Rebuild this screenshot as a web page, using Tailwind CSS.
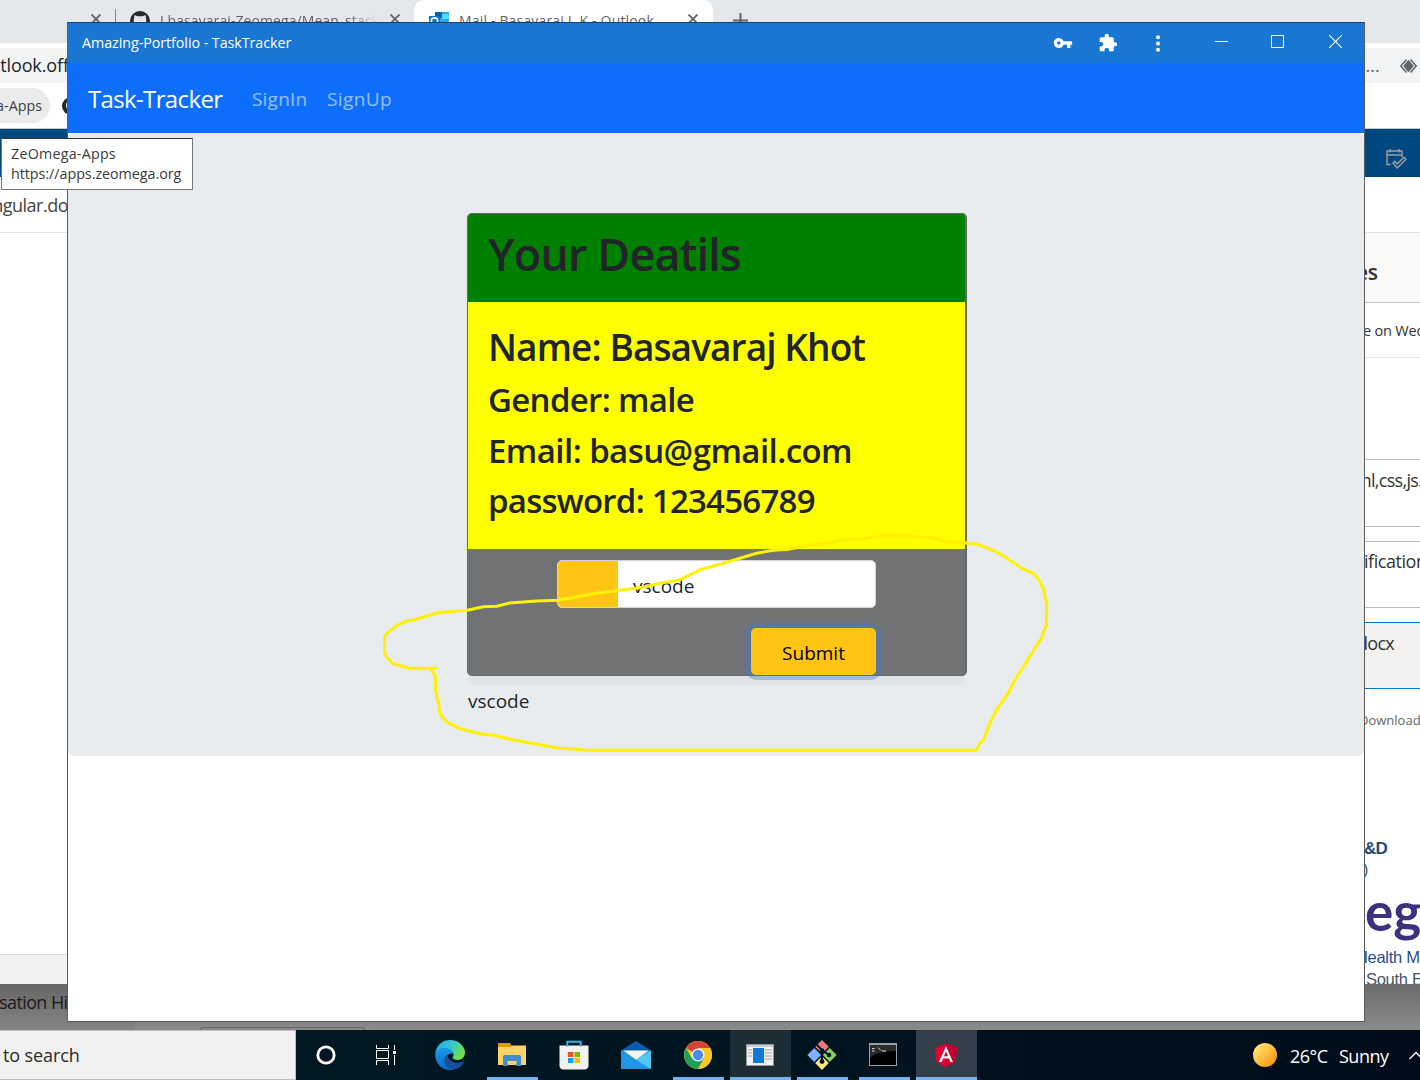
<!DOCTYPE html>
<html lang="en">
<head>
<meta charset="utf-8">
<title>Amazing-Portfolio - TaskTracker</title>
<script src="https://cdn.jsdelivr.net/npm/@tailwindcss/browser@4"></script>
</head>
<body class="overflow-hidden">
<div class="relative w-[1420px] h-[1080px] overflow-hidden bg-[#858585] flex flex-col whitespace-nowrap font-['Open_Sans','Noto_Sans',sans-serif] text-[#212529]">

  <!-- Browser window behind -->
  <div class="h-[984px] shrink-0 bg-white flex flex-col">
    <!-- tab strip -->
    <div class="h-[43px] shrink-0 bg-[#e4e8eb] flex text-[14px] text-[#5f6368]">
      <div class="w-[115px] flex justify-end pt-[14px] pr-[14px]">
        <svg class="w-[10px] h-[10px]" viewBox="0 0 10 10" stroke="#5f6368" stroke-width="1.8"><path d="M0.5.5l9 9M9.5.5l-9 9"/></svg>
      </div>
      <div class="w-px h-[20px] mt-[9px] bg-[#85898c]"></div>
      <div class="w-[298px] flex pl-[14px]">
        <svg class="w-[20px] h-[20px] mt-[11px]" viewBox="0 0 20 20"><circle cx="10" cy="10" r="10" fill="#24292e"/><path d="M4.5 4l3 1.2h5l3-1.2.5 3.500c1 3-.5 6.500-4 7v5.500h-4v-5.500c-3.500-.5-5-4-4-7z" fill="#e4e8eb"/></svg>
        <div class="w-[218px] ml-[10px] overflow-hidden leading-[41px] [mask-image:linear-gradient(to_right,black_86%,transparent)]"><span class="tracking-[0.08px]">J basavaraj-Zeomega/Mean_stack</span></div>
        <svg class="w-[10px] h-[10px] mt-[14px] ml-[12px]" viewBox="0 0 10 10" stroke="#5f6368" stroke-width="1.8"><path d="M0.5.5l9 9M9.5.5l-9 9"/></svg>
      </div>
      <div class="w-[299px] bg-white rounded-t-[10px] flex pl-[15px]">
        <svg class="w-[20px] h-[20px] mt-[12px]" viewBox="0 0 20 20"><path d="M6 0h14v12H6z" fill="#28a8ea"/><path d="M6 0h7v6H6z" fill="#0a62b8"/><path d="M13 2h7v5h-7z" fill="#50d9ff"/><path d="M0 4h11v12H0z" fill="#0078d4"/><circle cx="5.500" cy="9" r="3.200" fill="none" stroke="#fff" stroke-width="1.700"/></svg>
        <div class="w-[219px] ml-[10px] leading-[41px]"><span class="tracking-[0.17px]">Mail - Basavaraj I. K - Outlook</span></div>
        <svg class="w-[10px] h-[10px] mt-[14px] ml-[10px]" viewBox="0 0 10 10" stroke="#5f6368" stroke-width="1.8"><path d="M0.5.5l9 9M9.5.5l-9 9"/></svg>
      </div>
      <svg class="w-[15px] h-[15px] mt-[13px] ml-[20px]" viewBox="0 0 15 15" stroke="#5f6368" stroke-width="2"><path d="M7.500 0v15M0 7.500h15"/></svg>
    </div>
    <!-- address row -->
    <div class="h-[35px] mt-[5px] shrink-0 bg-[#f1f3f4] flex justify-between items-center">
      <div class="w-[67px] flex justify-end overflow-hidden text-[18px]"><span class="-mr-[2px] tracking-[-0.1px]">utlook.off</span></div>
      <div class="w-[55px] flex items-center text-[18px] text-[#5f6368] overflow-hidden">
        <span class="-ml-[8px] w-[43px] shrink-0">s...</span>
        <svg class="w-[17px] h-[14px] shrink-0" viewBox="0 0 17 14"><path d="M6.500.5.8 7l5.700 6.500M10.500.5 16.200 7l-5.700 6.500" fill="none" stroke="#5f6368" stroke-width="1.500"/><path d="M8.500.8 13.800 7l-5.300 6.200L3.200 7z" fill="#5f6368"/></svg>
      </div>
    </div>
    <!-- bookmarks -->
    <div class="h-[45px] shrink-0 flex items-center">
      <div class="w-[50px] h-[35px] rounded-r-full bg-[#ebebeb] flex items-center justify-end pr-[8px] overflow-hidden text-[14.300px]"><span class="text-[#3c4043]">a-Apps</span></div>
      <svg class="w-[18px] h-[18px] ml-[12px]" viewBox="0 0 18 18"><circle cx="9" cy="9" r="9" fill="#24292e"/><circle cx="10" cy="8.500" r="6" fill="#fff"/></svg>
    </div>
    <div class="h-[49px] shrink-0 border-t border-[#c8c8c8] bg-[#004880] flex justify-end items-center pr-[13px]">
      <svg class="w-[21px] h-[20px] mt-[12px]" viewBox="0 0 21 20" fill="none" stroke="#a19f9d" stroke-width="1.400"><path d="M4.500 15.500H1V2h15v6M1 6h15M4 0v3.500M13 0v3.500"/><path d="M7 14l1.700-1.700 2.500 2.400 6.800-6.400 2 2L11.200 19z"/></svg>
    </div>
    <div class="h-[55px] shrink-0 flex items-center overflow-hidden text-[18px] text-[#444] pt-[2px]"><div class="w-[68px] flex justify-end overflow-hidden"><span class="tracking-[-0.5px]">ngular.do</span></div></div>
    <div class="h-[752px] shrink-0 border-t border-[#e3e3e3] flex justify-between">
      <div class="w-[67px] flex flex-col justify-end"><div class="h-[30px] bg-[#f3f2f1] border-t border-[#d8d8d8]"></div></div>
      <div class="w-[55px] overflow-hidden flex flex-col text-[#333] text-[18px]">
        <div class="h-[70px] shrink-0 bg-[#faf9f8] border-b border-[#c8c6c4] text-[21px] font-semibold leading-[78px]"><span class="-ml-[9px] tracking-[-0.3px]">es</span></div>
        <div class="h-[55px] shrink-0 border-b border-[#e6e6e6] leading-[55px] text-[14.500px]"><span class="-ml-[2px] tracking-[-0.2px]">e on Wed</span></div>
        <div class="h-[68px] shrink-0 mt-[101px] border-y border-[#bdbdbd] leading-[41px]"><span class="-ml-[10px] tracking-[-0.7px]">ml,css,js.</span></div>
        <div class="h-[67px] shrink-0 mt-[14px] border-y border-[#bdbdbd] leading-[39px]"><span class="-ml-px tracking-[-0.45px]">ification</span></div>
        <div class="h-[67px] shrink-0 mt-[14px] bg-[#f3f2f1] border-y border-[#0078d4] leading-[41px]"><span class="-ml-[8px] tracking-[-0.7px]">docx</span></div>
        <div class="h-[30px] shrink-0 mt-[16px] text-[13px] leading-[30px] text-[#666]"><span class="-ml-[6px]">Download</span></div>
        <div class="mt-[101px] h-[26px] shrink-0 font-['Liberation_Sans',sans-serif] font-bold text-[17px] leading-[26px] text-[#1f497d]"><span class="-ml-px tracking-[-0.8px]">&amp;D</span></div>
        <div class="h-[22px] shrink-0 font-['Liberation_Sans',sans-serif] text-[16px] leading-[16px] text-[#44546a]"><span class="-ml-[2px]">)</span></div>
        <div class="h-[62px] shrink-0 font-['Lato',sans-serif] font-bold text-[53px] leading-[54px] text-[#3f2f7f]">eg</div>
        <div class="h-[22px] shrink-0 font-['Liberation_Sans',sans-serif] text-[16.500px] leading-[22px] text-[#1f4e8c]"><span class="-ml-[9px] tracking-[-0.3px]">Health M</span></div>
        <div class="h-[22px] shrink-0 font-['Liberation_Sans',sans-serif] text-[16.500px] leading-[22px] text-[#44546a]"><span class="ml-px tracking-[-0.3px]">South E</span></div>
      </div>
    </div>
  </div>

  <!-- Desktop strip under the browser -->
  <div class="h-[46px] shrink-0 flex bg-linear-to-b from-[#6c6c6c] to-[#8b8b8b]">
    <div class="w-[135px] bg-black/5 overflow-hidden text-[18px] leading-[37px] text-[#1a1a1a]"><span class="-ml-px tracking-[-0.6px]">sation Hi</span></div>
    <div class="self-end w-[165px] h-[3px] ml-[65px] rounded-t-[3px] border border-b-0 border-[#666]"></div>
  </div>

  <!-- Taskbar -->
  <div class="h-[50px] shrink-0 bg-linear-to-r from-[#001a22] via-[#001520] to-[#000c1a] flex text-white">
    <div class="w-[296px] bg-[#f1f1f1] border border-l-0 border-[#bfbfbf] text-[#2a2a2a] text-[18px] leading-[48px] pl-[3px]"><span class="tracking-[-0.1px]">to search</span></div>
    <div class="w-[60px] flex items-center justify-center"><svg class="w-[20px] h-[20px]" viewBox="0 0 20 20"><circle cx="10" cy="10" r="8.200" fill="none" stroke="#fff" stroke-width="2.800"/></svg></div>
    <div class="w-[63px] flex items-center pl-[20px]"><svg class="w-[21px] h-[20px]" viewBox="0 0 21 20" fill="none" stroke="#fff"><path d="M.5 0v3.500h12V0M.5 20v-4.500h12V20M.5 5.500h12v8H.5zM18.500 0v5M18.500 10v10"/><path d="M17 6h3v3h-3z" fill="#fff" stroke="none"/></svg></div>
    <div class="w-[62px] flex items-center justify-center">
      <svg class="w-[30px] h-[30px]" viewBox="0 0 30 30"><defs><linearGradient id="e1" x1="0" y1="0" x2="1" y2=".4"><stop offset="0" stop-color="#2aa5e8"/><stop offset=".55" stop-color="#35c5d0"/><stop offset="1" stop-color="#6be04c"/></linearGradient><linearGradient id="e2" x1="0" y1="0" x2="0" y2="1"><stop offset="0" stop-color="#1c9be8"/><stop offset="1" stop-color="#0a66c8"/></linearGradient></defs>
      <path d="M.4 12.500C2 4.500 8 0 15 0c9 0 15 6.500 15 12.500 0 4.500-3 7.500-7 7.500-3.500 0-5.500-1.200-5.500-2.200 0-.8 1-1.300 1-3.300 0-3-3-6-8-6-4.500 0-8.500 2-10.100 4z" fill="url(#e1)"/>
      <path d="M.3 12c2-3 5.500-4.500 10.200-4 4.500.3 7.800 3.200 8 6.300-1-1.800-7-1-7.500 4C10.600 23 14 28 20 29c-2 .8-3.500 1-5 1C6 30-1 22 .3 12z" fill="url(#e2)"/>
      <path d="M11.300 15.500c-3 3-2.800 8.500.7 11.500 3.500 3 8 3 11 1.300 3-1.800 5-4 6-6.300.2-.6-.3-.8-.8-.5-3 1.500-8.500 1.800-12.200-.8-2-1.400-3-3.200-3-4.700z" fill="#15509e"/></svg>
    </div>
    <div class="w-[62px] flex flex-col items-center justify-between">
      <svg class="w-[28px] h-[24px] mt-[12px]" viewBox="0 0 28 24"><path d="M0 5h11l3-1.500h14V23H0z" fill="#fbd263"/><path d="M0 1h12l1.500 2.500-1.500 1.500H0z" fill="#e09a00"/><path d="M5 24V14.500q0-1.500 1.500-1.500h15q1.500 0 1.500 1.500V24h-4.500v-5h-9v5z" fill="#3f8fd0"/></svg>
      <div class="w-[51px] h-[3px] bg-[#76b2ed]"></div>
    </div>
    <div class="w-[62px] flex items-center justify-center pr-px">
      <svg class="w-[30px] h-[30px]" viewBox="0 0 30 30"><path d="M.5 5.500h29V25a4 4 0 0 1-4 4.500h-21a4 4 0 0 1-4-4.500z" fill="#f2f2f2"/><path d="M8.300 6.500V1.800h13.400V6.500" fill="none" stroke="#2fb5ea" stroke-width="2"/><path d="M9 12h5.500v5H9z" fill="#f25022"/><path d="M15.500 12H21v5h-5.500z" fill="#7fba00"/><path d="M9 18h5.500V23H9z" fill="#00a4ef"/><path d="M15.500 18H21V23h-5.500z" fill="#ffb900"/></svg>
    </div>
    <div class="w-[62px] flex items-center justify-center">
      <svg class="w-[30px] h-[28px]" viewBox="0 0 30 28"><path d="M15 0 30 9.500H0z" fill="#0a5caa"/><path d="M0 9.500h30V28H0z" fill="#1fa3ea"/><path d="M2.500 9.500h25L15 19z" fill="#f3f3f3"/><path d="M0 9.500 30 28H0z" fill="#2196e6"/><path d="M30 9.500 15 18.800 30 28z" fill="#50c8f4"/></svg>
    </div>
    <div class="w-[62px] flex flex-col items-center justify-between">
      <svg class="w-[28px] h-[28px] mt-[11px]" viewBox="0 0 28 28"><circle cx="14" cy="14" r="14" fill="#fbc926"/><path d="M14 14 1.900 7A14 14 0 0 1 26.100 7z" fill="#d94335"/><path d="M1.900 7A14 14 0 0 0 14 28l6-10.500L14 14 8 17.500z" fill="#1fa05a"/><path d="M20 17.500 14 28A14 14 0 0 0 26.100 7H14z" fill="#fbc926"/><circle cx="14" cy="14" r="6.500" fill="#fff"/><circle cx="14" cy="14" r="5.200" fill="#4a8af4"/></svg>
      <div class="w-[51px] h-[3px] bg-[#76b2ed]"></div>
    </div>
    <div class="w-[62px] pl-px flex"><div class="w-[61px] bg-[#1c2d36] flex flex-col items-center justify-between">
      <svg class="w-[28px] h-[22px] mt-[14px] mr-px" viewBox="0 0 28 22"><path d="M0 0h28v22H0z" fill="#8f979b"/><path d="M1 3h26v18H1z" fill="#f2f2f2"/><path d="M1 1h26v2H1z" fill="#c9cfd1"/><path d="M7 4h11v15H7z" fill="#0f7bd8"/><path d="M2 6h4M2 9h4M2 12h4M19 6h7M19 9h7M19 12h7M19 15h7" stroke="#a5a5a5"/></svg>
      <div class="w-[61px] h-[3px] bg-[#76b2ed]"></div>
    </div></div>
    <div class="w-[62px] flex flex-col items-center justify-between">
      <svg class="w-[30px] h-[30px] mt-[10px]" viewBox="0 0 30 30"><path d="M15 0l6.800 6.800-6.800 6.800-6.800-6.800z" fill="#f2797b"/><path d="M7.300 7.900 14.100 15l-6.800 7L.3 15z" fill="#80b0ff"/><path d="M22.700 7.900 29.700 15l-7 7L15.900 15z" fill="#8cd060"/><path d="M15 16.200l6.800 6.900L15 30l-6.800-6.900z" fill="#ffe580"/><path d="M9.500 4.500 15 10v13M15 10l7 5" fill="none" stroke="#001520" stroke-width="2"/><circle cx="15" cy="10.500" r="2.300" fill="#001520"/><circle cx="15" cy="21.500" r="2.400" fill="#001520"/><circle cx="22" cy="15" r="2.300" fill="#001520"/></svg>
      <div class="w-[51px] h-[3px] bg-[#76b2ed]"></div>
    </div>
    <div class="w-[62px] flex flex-col items-center justify-between">
      <svg class="w-[28px] h-[23px] mt-[13px] mr-[2px]" viewBox="0 0 28 23"><path d="M0 0h28v23H0z" fill="#9aa1a5"/><path d="M1 2h26v20H1z" fill="#000"/><path d="M1 2h26v6C16 8 6 10 1 15z" fill="#2b2b2b"/><path d="M3 5.500h2.500M3 8h2.500M9 4.500l3 3M13 8h4" stroke="#ddd"/></svg>
      <div class="w-[51px] h-[3px] bg-[#76b2ed]"></div>
    </div>
    <div class="w-[62px] pl-px flex"><div class="w-[61px] bg-[#33404b] flex flex-col items-center justify-between">
      <svg class="w-[30px] h-[30px] mt-[10px] mr-px" viewBox="0 0 250 250"><path d="M125 30 31.900 63.200 46.100 186.300 125 230l78.900-43.700 14.200-123.100z" fill="#dd0031"/><path d="M125 30v200l78.900-43.700 14.200-123.100z" fill="#c3002f"/><path d="M125 52.100 66.800 182.600h21.700l11.700-29.200h49.400l11.700 29.200H183zm17 83.300h-34l17-40.900z" fill="#fff"/></svg>
      <div class="w-[61px] h-[3px] bg-[#76b2ed]"></div>
    </div></div>
    <div class="ml-auto w-[167px] flex items-center text-[18px]">
      <svg class="w-[24px] h-[24px] shrink-0" viewBox="0 0 24 24"><defs><linearGradient id="sun" x1="0" y1="0" x2="1" y2="1"><stop offset=".1" stop-color="#ffe873"/><stop offset="1" stop-color="#ff8a00"/></linearGradient></defs><circle cx="12" cy="12" r="12" fill="url(#sun)"/></svg>
      <div class="w-[49px] ml-[13px] pt-[2px] shrink-0"><span class="tracking-[-0.5px]">26°C</span></div><div class="w-[70px] pt-[2px] shrink-0"><span class="tracking-[-0.5px]">Sunny</span></div>
      <svg class="w-[14px] h-[9px] shrink-0" viewBox="0 0 14 9" fill="none" stroke="#fff" stroke-width="1.300"><path d="M.5 8 7 1.500 13.500 8"/></svg>
    </div>
  </div>

  <!-- TaskTracker window -->
  <div class="absolute left-[67px] top-[22px] w-[1298px] h-[1000px] border border-[#5b5b5b] border-t-[#1b3f66] bg-white flex flex-col">
    <div class="h-[40px] shrink-0 bg-[#1976d2] flex items-center text-white text-[14.300px] pl-[14px]">
      <span class="tracking-[-0.06px]">Amazing-Portfolio - TaskTracker</span>
      <div class="ml-auto flex items-center">
        <div class="w-[40px] flex justify-center"><svg class="w-[20px] h-[20px]" viewBox="0 0 24 24" fill="#fff"><path d="M12.650 10C11.830 7.670 9.610 6 7 6c-3.310 0-6 2.690-6 6s2.690 6 6 6c2.610 0 4.830-1.670 5.650-4H17v4h4v-4h2v-4H12.650zM7 14c-1.100 0-2-.9-2-2s.9-2 2-2 2 .9 2 2-.9 2-2 2z"/></svg></div>
        <div class="w-[50px] flex justify-center"><svg class="w-[20px] h-[20px]" viewBox="0 0 24 24" fill="#fff"><path d="M20.500 11H19V7c0-1.100-.9-2-2-2h-4V3.500C13 2.120 11.880 1 10.500 1S8 2.120 8 3.500V5H4c-1.100 0-1.990.9-1.990 2v3.800H3.500c1.490 0 2.700 1.210 2.700 2.700s-1.210 2.700-2.700 2.700H2V20c0 1.100.9 2 2 2h3.800v-1.500c0-1.490 1.210-2.700 2.700-2.700 1.490 0 2.700 1.210 2.700 2.700V22H17c1.100 0 2-.9 2-2v-4h1.500c1.380 0 2.500-1.120 2.500-2.500S21.880 11 20.500 11z"/></svg></div>
        <div class="w-[50px] flex justify-center"><svg class="w-[4px] h-[17px]" viewBox="0 0 4 17" fill="#fff"><circle cx="2" cy="2.200" r="2"/><circle cx="2" cy="8.500" r="2"/><circle cx="2" cy="14.800" r="2"/></svg></div>
        <div class="w-[67px] pl-[10px] flex justify-center"><div class="w-[13px] h-px bg-white -mt-[2px]"></div></div>
        <div class="w-[56px] flex justify-center pr-[2px]"><div class="w-[13px] h-[13px] border border-white -mt-[3px]"></div></div>
        <div class="w-[58px] flex justify-center"><svg class="w-[13px] h-[13px] -mt-[3px]" viewBox="0 0 13 13" stroke="#fff" stroke-width="1.100"><path d="M0 0l13 13M13 0 0 13"/></svg></div>
      </div>
    </div>
    <div class="h-[70px] shrink-0 bg-[#0d6efd] flex items-center pl-[20px] pt-[2px] text-[19px] text-white/55">
      <div class="w-[164px] text-[24px] text-white"><span class="tracking-[-0.64px]">Task-Tracker</span></div>
      <div class="w-[75px]"><span class="tracking-[0.2px]">SignIn</span></div>
      <div><span class="tracking-[0.4px]">SignUp</span></div>
    </div>
    <div class="h-[623px] shrink-0 bg-[#e8ecef] rounded-[5px] pt-[80px] pl-[399px] text-[19px]">
      <div class="w-[500px] h-[463px] rounded-[5px] border border-r-2 border-[#66686a] bg-[#707274] overflow-hidden flex flex-col font-semibold">
        <div class="h-[88px] shrink-0 bg-[#008000] pl-[20px] pt-[11px] text-[45px] leading-[57px]"><span class="tracking-[-0.9px]">Your Deatils</span></div>
        <div class="h-[248px] shrink-0 bg-[#ffff00] border-b border-[#777] pl-[20px] pt-[20px] text-[33px] leading-[50.500px]">
          <div class="text-[37px] leading-[49px] mb-[4px] tracking-[-0.9px]">Name: Basavaraj Khot</div>
          <div class="tracking-[-0.68px]">Gender: male</div>
          <div class="tracking-[-0.56px]">Email: basu@gmail.com</div>
          <div class="tracking-[-0.75px]">password: 123456789</div>
        </div>
        <div class="pt-[10px] pl-[89px] font-normal">
          <div class="w-[319px] h-[48px] rounded-[5px] bg-white border border-[#ced4da] overflow-hidden flex items-center">
            <div class="w-[60px] h-full bg-[#ffc414] mr-[15px]"></div><span class="mt-[4px]">vscode</span>
          </div>
        </div>
      </div>
      <div class="w-[497px] h-[9px] ml-px bg-[#e0e4e7] rounded-b-[5px]"></div>
      <div class="leading-[30px] mt-px ml-px"><span>vscode</span></div>
    </div>
    <!-- focused submit button, its ring spills over the card edge -->
    <button class="absolute left-[683px] top-[605px] w-[125px] h-[47px] rounded-[5px] bg-[#ffc414] ring-5 ring-[#3d7ae0]/40 text-black text-[19px] leading-[47px] pt-[2px]">Submit</button>
  </div>

  <!-- bookmark tooltip -->
  <div class="absolute left-px top-[138px] w-[192px] h-[52px] bg-white border border-[#767676] border-t-[#333] pl-[9px] pt-[5px] text-[14.300px] leading-[20px] text-[#3b3b3b]">
    <div class="tracking-[0.22px]">ZeOmega-Apps</div><div class="tracking-[-0.03px]">https://apps.zeomega.org</div>
  </div>

  <!-- freehand marker stroke -->
  <svg class="absolute left-0 top-0 w-[1420px] h-[1080px] pointer-events-none" viewBox="0 0 1420 1080" fill="none" stroke="#fff200" stroke-width="3" stroke-linejoin="round" stroke-linecap="round">
    <path d="M436.500 668.300H409.300L393.300 663.700 386.700 657.300 384.500 652.700V636L390.700 630 398.300 624.700 406 621.300 413.300 620 437.700 612.700 467.300 610.300 483.300 606.700 496.700 606.300 510 603 536.700 601 557.300 600.300 596.700 593.300 643.300 587.300 660 583.300 678.300 580.300 693.300 573.300 700 569.700 720 564.200 740 558.300 756.700 553.300 773.300 550.300 786.700 549.500"/>
    <path stroke="#fff000" d="M786.700 549.500 811.700 544.700 830 543.300 841.700 540 866.700 538.300 881.700 535.700H910L930 537.700 946.700 541 966.700 543"/>
    <path d="M966.700 543 977.300 544.300 988.300 548.300 1001.700 554.700 1021.700 568.300 1033.300 573.300 1038.300 579 1043.300 588.300 1046.700 603.300 1046.300 625 1041.300 638.300 1015 680 1008 693.300 996 711 990.700 721.300 983.700 739.300 979.300 744 977.300 749 976 750.300H588.300L556.700 747.700 515 740.300 493.300 735.300 482.700 734.300 460 728.700 447.300 722.300 440 714.300 438.700 704.300 435.700 691.700 435.300 676 433.300 672.300 430 669"/>
  </svg>
</div>
</body>
</html>
